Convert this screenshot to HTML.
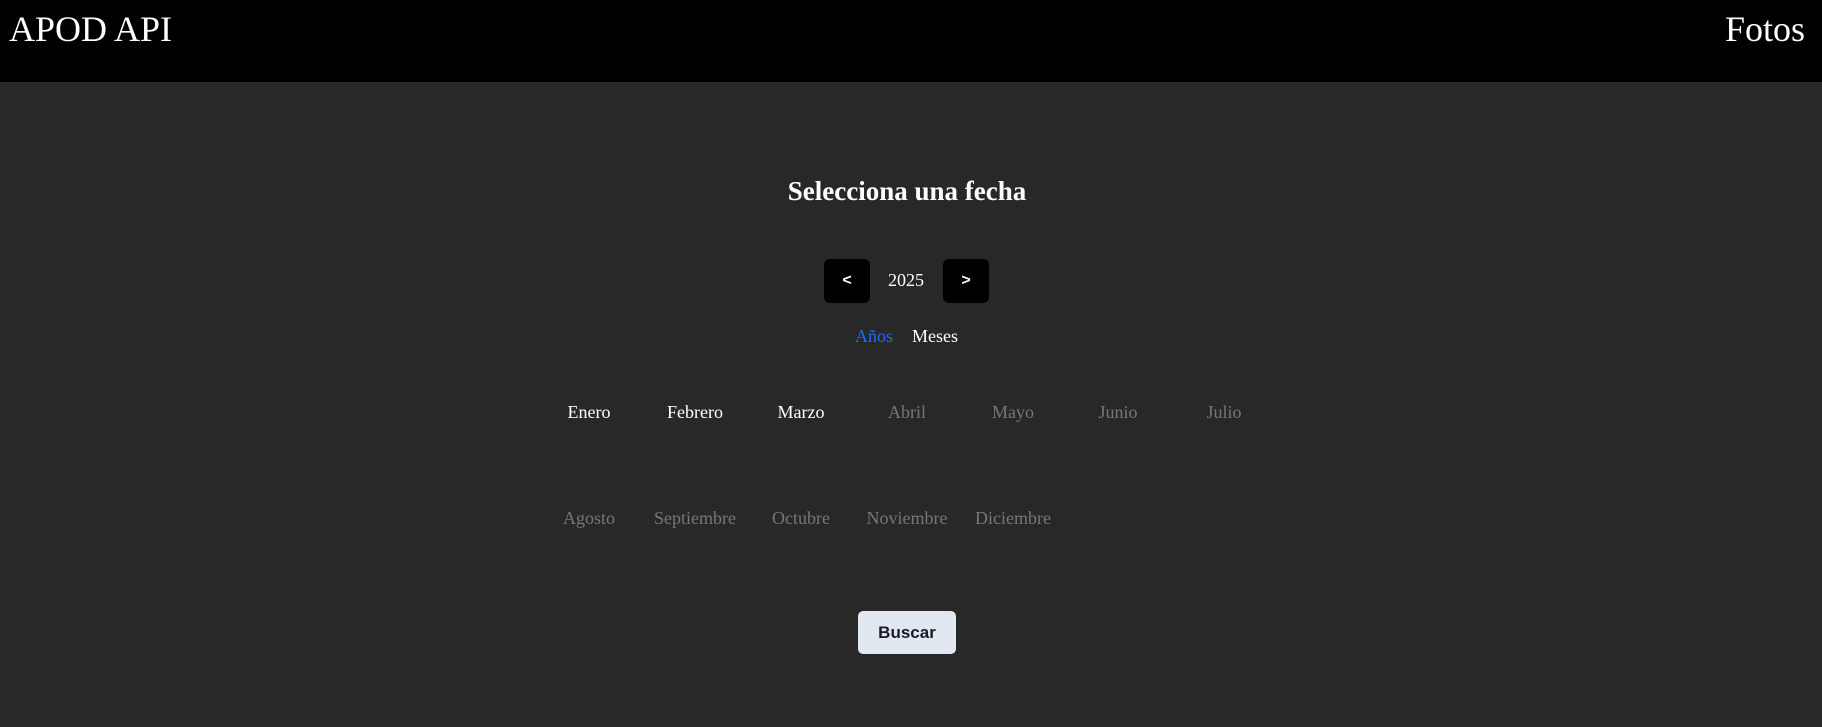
<!DOCTYPE html>
<html><head><meta charset="utf-8"><style>
*{margin:0;padding:0;box-sizing:border-box}
body{width:1822px;height:727px;background:#282828;font-family:"Liberation Serif",serif;color:#fff;position:relative;overflow:hidden}
.hdr{position:absolute;left:0;top:0;width:1822px;height:82px;background:#000}
.t{position:absolute;white-space:nowrap;line-height:1}
.c{transform:translateX(-50%)}
.btn{position:absolute;top:259px;width:46px;height:44px;background:#000;border-radius:6px;color:#fff;font:bold 16px "Liberation Sans",sans-serif;display:flex;align-items:center;justify-content:center}
.m{position:absolute;font-size:18px;line-height:1;transform:translateX(-50%);white-space:nowrap}
.w{color:#fff}.g{color:#777}
.buscar{position:absolute;left:858px;top:611px;width:98px;height:43px;background:#e2e8f0;border-radius:5px;color:#1a1a2e;font:bold 17px "Liberation Sans",sans-serif;display:flex;align-items:center;justify-content:center}
</style></head><body>
<div class="hdr"></div>
<div class="t" style="left:9px;top:11px;font-size:36px">APOD API</div>
<div class="t" style="right:17px;top:11px;font-size:36px">Fotos</div>
<div class="t c" style="left:907px;top:178px;font-size:27px;font-weight:bold">Selecciona una fecha</div>
<div class="btn" style="left:824px">&lt;</div>
<div class="t c" style="left:906px;top:271px;font-size:18px">2025</div>
<div class="btn" style="left:943px">&gt;</div>
<div class="t" style="left:855px;top:327px;font-size:18px;color:#1a6cff">Años</div>
<div class="t" style="left:912px;top:327px;font-size:18px">Meses</div>
<div class="m w" style="left:589px;top:403px">Enero</div>
<div class="m w" style="left:695px;top:403px">Febrero</div>
<div class="m w" style="left:801px;top:403px">Marzo</div>
<div class="m g" style="left:907px;top:403px">Abril</div>
<div class="m g" style="left:1013px;top:403px">Mayo</div>
<div class="m g" style="left:1118px;top:403px">Junio</div>
<div class="m g" style="left:1224px;top:403px">Julio</div>
<div class="m g" style="left:589px;top:509px">Agosto</div>
<div class="m g" style="left:695px;top:509px">Septiembre</div>
<div class="m g" style="left:801px;top:509px">Octubre</div>
<div class="m g" style="left:907px;top:509px">Noviembre</div>
<div class="m g" style="left:1013px;top:509px">Diciembre</div>
<div class="buscar">Buscar</div>
</body></html>
